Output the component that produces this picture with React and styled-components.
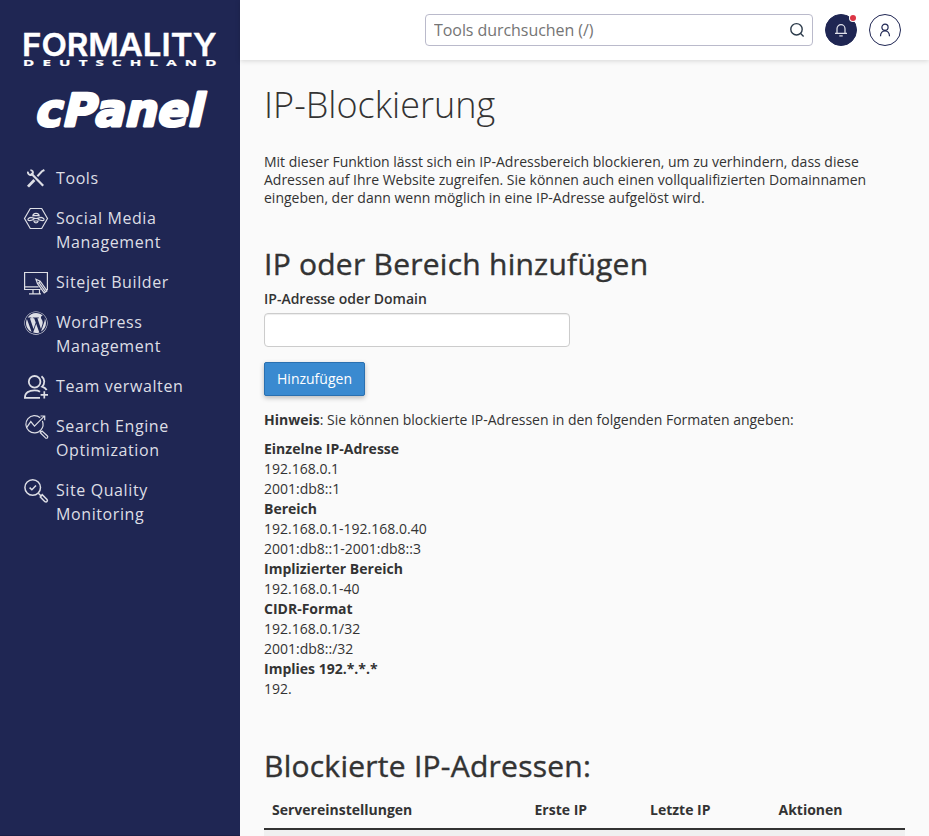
import React, { useState } from 'react';

import styled, { createGlobalStyle } from 'styled-components';
import { FaWordpress as WordPressIcon } from 'react-icons/fa';

const ToolsIcon = () => (
  <svg width="24" height="24" viewBox="0 0 24 24" fill="none">
    <path d="M7 7.2L19.2 19.8" stroke="currentColor" strokeWidth="2.2" />
    <path
      d="M3.9 5.6c-.4 3.4 3.8 4.4 4.8 2.2.9-1.9-.3-3.6-2.3-3.7"
      stroke="currentColor"
      strokeWidth="1.8"
    />
    <path
      d="M20.4 4l-2.4 1.2-4.6 5"
      stroke="currentColor"
      strokeWidth="2"
    />
    <path d="M10.4 14L4 20.6" stroke="currentColor" strokeWidth="2.8" />
  </svg>
);

const SocialIcon = () => (
  <svg
    width="24"
    height="24"
    viewBox="0 0 24 24"
    fill="none"
    stroke="currentColor"
  >
    <path d="M6.3 2.5h11.4l5.8 10-5.8 10H6.3l-5.8-10z" strokeWidth="1.2" />
    <path d="M8.8 10.6c0-4.2 6.4-4.2 6.4 0M8.6 9.6h6.8" strokeWidth="1.2" />
    <path
      d="M10.8 12.4L7 11.3c-2.3.3-4 2.4-2.4 3.2 2.2.4 4.6-.6 6.2-2.1zM13.2 12.4l3.8-1.1c2.3.3 4 2.4 2.4 3.2-2.2.4-4.6-.6-6.2-2.1z"
      strokeWidth="1.2"
    />
    <path d="M9.8 15c.5 2.6 3.9 2.6 4.4 0zM11 12.5h2" strokeWidth="1.2" />
  </svg>
);

const SitejetIcon = () => (
  <svg
    width="24"
    height="24"
    viewBox="0 0 24 24"
    fill="none"
    stroke="currentColor"
    strokeWidth="1.2"
  >
    <path d="M16.5 19.5H.6v-17h22.8v17H22M.6 16.8h14M9 19.5v4M15.5 19.5v4M5 23.9h12" />
    <path d="M12 9.3l4.2 1.9 6.8 9.6-2.8 2-6.8-9.4zM13.8 13.6l2.6-2M15.4 13.2l6.2 8.6" />
  </svg>
);

const TeamIcon = () => (
  <svg
    width="24"
    height="24"
    viewBox="0 0 24 24"
    fill="none"
    stroke="currentColor"
    strokeWidth="1.8"
  >
    <circle cx="10.6" cy="6.8" r="5.8" />
    <path d="M17.5 1.2c3.6 2.6 3.6 7.8.6 10.4 2.3.8 3.6 1.8 4.6 3.4M16 22.8H.9c0-5.4 4.4-7.4 9.6-7.4 2.3 0 4.3.5 5.5 1.3" />
    <path d="M20.3 16.2v7.4M16.6 19.9H24" strokeWidth="1.7" />
  </svg>
);

const SearchEngineIcon = () => (
  <svg
    width="24"
    height="24"
    viewBox="0 0 24 24"
    fill="none"
    stroke="currentColor"
    strokeWidth="1.2"
  >
    <path d="M16.2 2.8a8.6 8.6 0 1 0 .8 12A8.6 8.6 0 0 0 18.4 6" />
    <path d="M2.6 12.6l4.2-6 3.7 4.5L20.6.9M16.5 1h4.2v4.3" />
    <path d="M15.8 15.6l1.6 1.6M16.3 17.8l5.2 5.1c1.5 1 3-.6 1.9-1.9L18.1 16z" />
  </svg>
);

const SiteQualityIcon = () => (
  <svg
    width="24"
    height="24"
    viewBox="0 0 24 24"
    fill="none"
    stroke="currentColor"
    strokeWidth="1.5"
  >
    <circle cx="8.7" cy="8.5" r="7.8" />
    <path d="M5.6 8.6l2.3 2.2 4.1-4.2M14.3 14.2l2.6 2.5" />
    <path d="M16.3 18l4.6 4.7c1.7 1 3.2-.6 2.1-2.2l-4.8-4.8z" />
  </svg>
);

const MENU_ITEMS = [
  { label: 'Tools', icon: <ToolsIcon /> },
  { label: 'Social Media Management', icon: <SocialIcon /> },
  { label: 'Sitejet Builder', icon: <SitejetIcon /> },
  {
    label: 'WordPress Management',
    icon: <WordPressIcon size={24} />,
    iconOffset: 1,
  },
  { label: 'Team verwalten', icon: <TeamIcon />, iconOffset: 1 },
  {
    label: 'Search Engine Optimization',
    icon: <SearchEngineIcon />,
    iconOffset: 1,
  },
  {
    label: 'Site Quality Monitoring',
    icon: <SiteQualityIcon />,
    iconOffset: 1,
  },
];

const FORMATS = [
  { title: 'Einzelne IP-Adresse', examples: ['192.168.0.1', '2001:db8::1'] },
  {
    title: 'Bereich',
    examples: ['192.168.0.1-192.168.0.40', '2001:db8::1-2001:db8::3'],
  },
  { title: 'Implizierter Bereich', examples: ['192.168.0.1-40'] },
  { title: 'CIDR-Format', examples: ['192.168.0.1/32', '2001:db8::/32'] },
  { title: 'Implies 192.*.*.*', examples: ['192.'] },
];

function Logos() {
  return (
    <LogoWrapper>
      <FormalityLogo width="192" height="36" viewBox="0 0 192 36">
        <text
          x="-2"
          y="24.5"
          fontFamily="Inter, sans-serif"
          fontSize="31.5"
          fontWeight="600"
          stroke="#fff"
          strokeWidth="0.4"
          textLength="194.5"
          lengthAdjust="spacingAndGlyphs"
        >
          FORMALITY
        </text>
        <g transform="scale(1.8 1)">
          <text
            x="-0.5"
            y="35"
            fontFamily="Open Sans, sans-serif"
            fontSize="8.4"
            fontWeight="700"
            stroke="#fff"
            strokeWidth="0.2"
            textLength="107.4"
          >
            DEUTSCHLAND
          </text>
        </g>
      </FormalityLogo>
      <CpanelLogo width="172" height="40" viewBox="0 0 172 40">
        <g transform="translate(1 36) skewX(-13)">
          <text
            x="-2"
            y="0"
            fontFamily="DejaVu Sans, sans-serif"
            fontSize="45"
            fontWeight="700"
            stroke="#fff"
            strokeWidth="2.8"
            strokeLinejoin="round"
            textLength="168"
            lengthAdjust="spacingAndGlyphs"
          >
            cPanel
          </text>
        </g>
      </CpanelLogo>
    </LogoWrapper>
  );
}

export default function App() {
  const [searchText, setSearchText] = useState('');
  const [address, setAddress] = useState('');

  return (
    <>
      <GlobalStyle />
      <Page>
        <Sidebar>
          <Logos />
          <Menu>
            {MENU_ITEMS.map(({ label, icon, iconOffset }) => (
              <MenuItem key={label}>
                <MenuIcon $offset={iconOffset}>{icon}</MenuIcon>
                <span>{label}</span>
              </MenuItem>
            ))}
          </Menu>
        </Sidebar>
        <Main>
          <TopBar>
            <SearchBox>
              <SearchInput
                placeholder="Tools durchsuchen (/)"
                value={searchText}
                onChange={e => setSearchText(e.target.value)}
              />
              <svg
                width="16"
                height="16"
                viewBox="0 0 16 16"
                fill="none"
                stroke="#2b3a4a"
                strokeWidth="1.4"
              >
                <circle cx="7.5" cy="7.3" r="5.7" />
                <path d="M11.6 11.4l3 3" />
              </svg>
            </SearchBox>
            <RoundButton $filled aria-label="Benachrichtigungen">
              <svg
                width="14"
                height="14"
                viewBox="0 0 14 14"
                fill="none"
                stroke="#e2e3ec"
                strokeWidth="1.2"
              >
                <path d="M1 10.3h12M3 10.3V5.7a4 4 0 0 1 8 0v4.6" />
                <path d="M5.3 12.9h3.4" />
              </svg>
              <Badge />
            </RoundButton>
            <RoundButton aria-label="Benutzer">
              <svg
                width="14"
                height="14"
                viewBox="0 0 14 14"
                fill="none"
                stroke="#1f2653"
                strokeWidth="1.2"
              >
                <circle cx="7" cy="4.3" r="3.1" />
                <path d="M2.5 13.2c0-7.2 9-7.2 9 0" />
              </svg>
            </RoundButton>
          </TopBar>
          <Content>
            <PageTitle>IP-Blockierung</PageTitle>
            <Description>
              Mit dieser Funktion lässt sich ein IP-Adressbereich blockieren, um
              zu verhindern, dass diese Adressen auf Ihre Website zugreifen. Sie
              können auch einen vollqualifizierten Domainnamen eingeben, der
              dann wenn möglich in eine IP-Adresse aufgelöst wird.
            </Description>
            <SectionTitle>IP oder Bereich hinzufügen</SectionTitle>
            <Label htmlFor="ip">IP-Adresse oder Domain</Label>
            <AddressInput
              id="ip"
              value={address}
              onChange={e => setAddress(e.target.value)}
            />
            <AddButton>Hinzufügen</AddButton>
            <Hint>
              <strong>Hinweis</strong>: Sie können blockierte IP-Adressen in den
              folgenden Formaten angeben:
            </Hint>
            <FormatList>
              {FORMATS.map(({ title, examples }) => (
                <React.Fragment key={title}>
                  <dt>{title}</dt>
                  {examples.map(example => (
                    <dd key={example}>{example}</dd>
                  ))}
                </React.Fragment>
              ))}
            </FormatList>
            <SectionTitle>Blockierte IP-Adressen:</SectionTitle>
            <TableHead>
              <span>Servereinstellungen</span>
              <span>Erste IP</span>
              <span>Letzte IP</span>
              <span>Aktionen</span>
            </TableHead>
            <TableRow />
          </Content>
        </Main>
      </Page>
    </>
  );
}

const GlobalStyle = createGlobalStyle`
  * {
    box-sizing: border-box;
  }

  body {
    margin: 0;
    overflow: hidden;
    font-family: 'Open Sans', sans-serif;
    font-size: 14px;
    color: #333;
    background-color: #fafafa;
  }
`;

const Page = styled.div`
  display: flex;
  height: 836px;
  overflow: hidden;
`;

const Sidebar = styled.aside`
  flex: 0 0 240px;
  color: #dddee5;
  background-color: #1f2653;
  border-bottom: 1px solid #1a1f47;
`;

const LogoWrapper = styled.div`
  display: flex;
  flex-direction: column;
  padding: 31px 24px 0;
  height: 158px;
`;

const FormalityLogo = styled.svg`
  overflow: visible;
  fill: #fff;
`;

const CpanelLogo = styled.svg`
  margin: 23px 0 0 11px;
  overflow: visible;
  fill: #fff;
`;

const Menu = styled.ul`
  margin: 0;
  padding: 8px 24px;
  display: flex;
  flex-direction: column;
  gap: 16px;
  list-style: none;
`;

const MenuItem = styled.li`
  display: flex;
  gap: 8px;
  font-size: 16px;
  line-height: 24px;
  letter-spacing: 0.6px;
  cursor: pointer;
`;

const MenuIcon = styled.span`
  flex: 0 0 24px;
  height: 24px;
  padding-top: ${props => props.$offset || 0}px;

  svg {
    display: block;
    overflow: visible;
  }
`;

const Main = styled.div`
  flex: 1;
  min-width: 0;
  display: flex;
  flex-direction: column;
`;

const TopBar = styled.header`
  flex: 0 0 60px;
  padding: 0 28px 0 185px;
  display: flex;
  align-items: center;
  gap: 12px;
  background-color: #fff;
  box-shadow: 0 1px 5px rgba(0, 0, 0, 0.15);
`;

const SearchBox = styled.div`
  flex: 1;
  min-width: 0;
  height: 32px;
  padding: 0 7px 0 8px;
  display: flex;
  align-items: center;
  border: 1px solid #babacb;
  border-radius: 4px;
`;

const SearchInput = styled.input`
  flex: 1;
  min-width: 0;
  padding: 0;
  border: none;
  outline: none;
  font: 16px 'Open Sans', sans-serif;
  letter-spacing: -0.06px;

  &::placeholder {
    color: #757575;
  }
`;

const RoundButton = styled.button`
  position: relative;
  flex: 0 0 32px;
  height: 32px;
  padding: 0;
  display: flex;
  align-items: center;
  justify-content: center;
  border: 1px solid #1f2653;
  border-radius: 50%;
  background-color: ${props => (props.$filled ? '#1f2653' : '#fff')};
  cursor: pointer;
`;

const Badge = styled.span`
  position: absolute;
  top: 0;
  right: 0;
  width: 6px;
  height: 6px;
  border-radius: 50%;
  background-color: #dc3545;
  box-shadow: 0 0 0 1px #fff;
`;

const Content = styled.main`
  flex: 1;
  padding: 0 24px;
`;

const PageTitle = styled.h1`
  margin: 24px 0 27px;
  font-size: 36px;
  font-weight: 300;
  line-height: 42px;
`;

const Description = styled.p`
  margin: 0;
  max-width: 620px;
  line-height: 18px;
  letter-spacing: -0.01px;
`;

const SectionTitle = styled.h2`
  margin: 40px 0 9px;
  font-size: 30px;
  font-weight: 500;
  line-height: 34px;
  letter-spacing: 0.25px;
  -webkit-text-stroke: 0.4px #333;
`;

const Label = styled.label`
  display: block;
  margin-bottom: 5px;
  font-weight: 600;
  line-height: 18px;
`;

const AddressInput = styled.input`
  display: block;
  width: 306px;
  height: 34px;
  border: 1px solid #ccc;
  border-radius: 4px;
  box-shadow: inset 0 1px 1px rgba(0, 0, 0, 0.075);
`;

const AddButton = styled.button`
  display: block;
  width: 101px;
  height: 34px;
  margin: 15px 0;
  padding: 0 0 2px;
  border: 1px solid #2a70b0;
  border-radius: 2px;
  font: 14px 'Open Sans', sans-serif;
  color: #fff;
  background-color: #3a8ad0;
  box-shadow: 0 2px 5px rgba(0, 0, 0, 0.26);
`;

const Hint = styled.p`
  margin: 0 0 10px;
  line-height: 18px;
`;

const FormatList = styled.dl`
  margin: 0 0 50px;
  line-height: 20px;

  dt {
    font-weight: 700;
  }

  dd {
    margin: 0;
  }
`;

const TableHead = styled.div`
  height: 38px;
  padding: 0 8px 9px;
  display: grid;
  grid-template-columns: 262.5px 115.5px 128.5px 1fr;
  align-items: end;
  border-bottom: 2px solid #333;
  font-weight: 700;
  line-height: 18px;
`;

const TableRow = styled.div`
  height: 30px;
  background-color: #f0f0f0;
`;
